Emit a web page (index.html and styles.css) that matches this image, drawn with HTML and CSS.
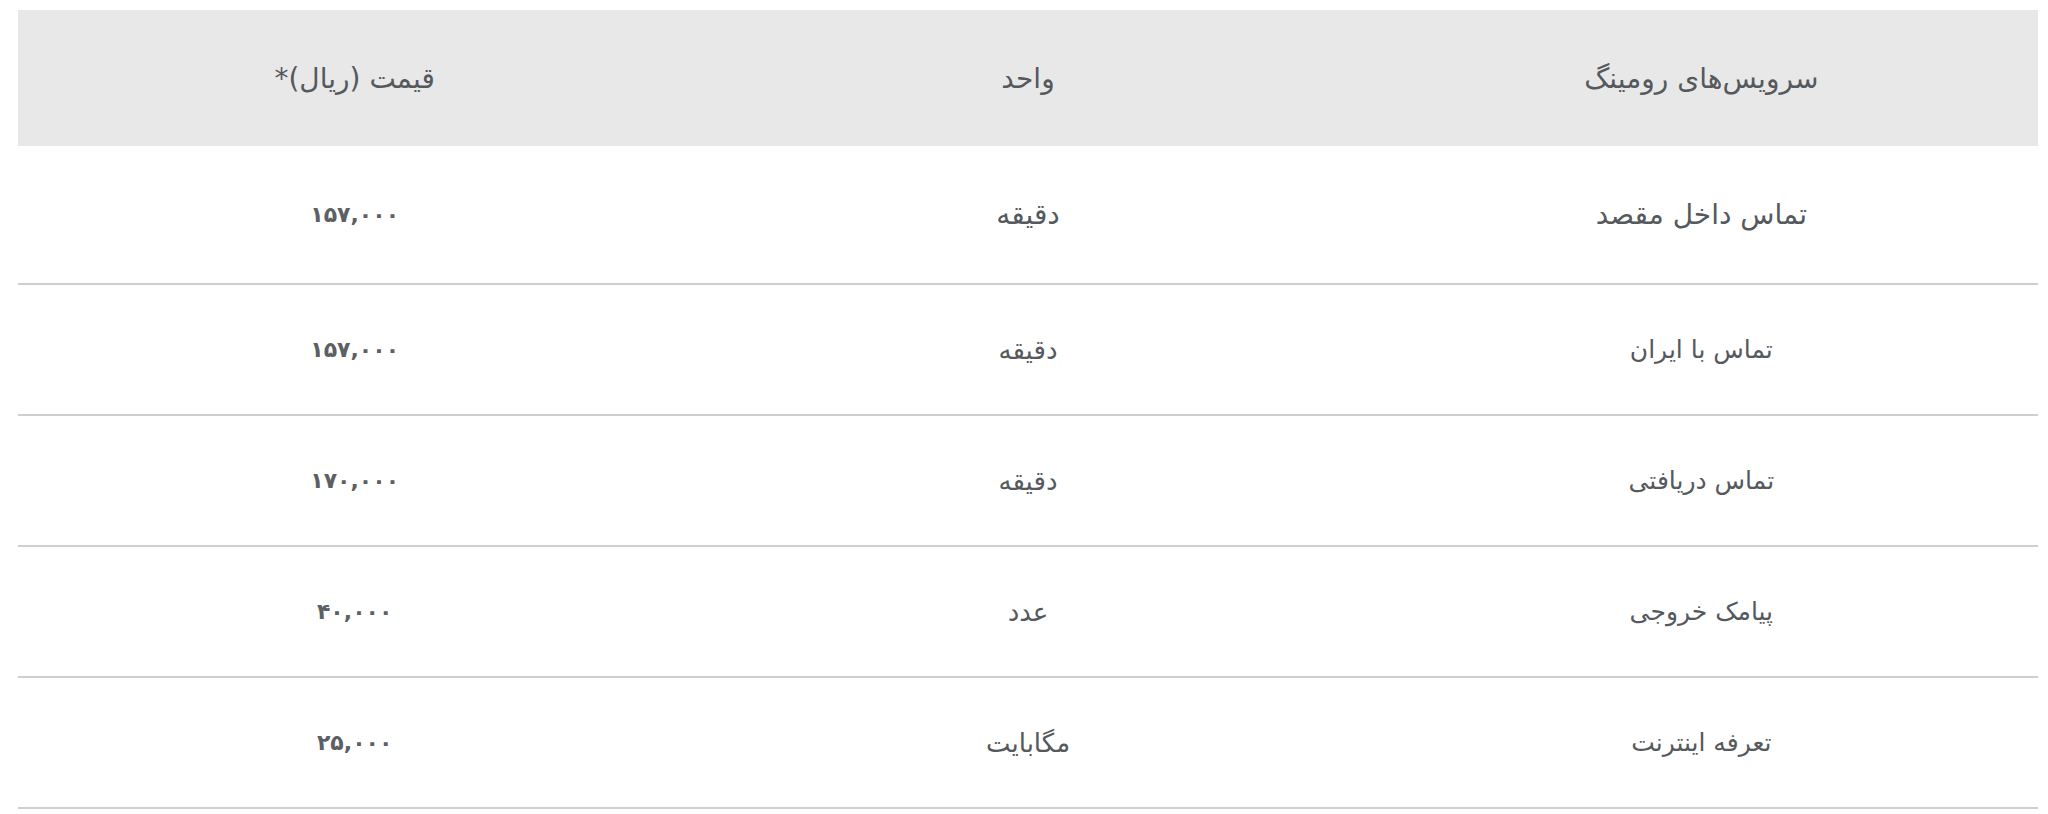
FILE: index.html
```html
<!DOCTYPE html>
<html lang="fa" dir="rtl">
<head>
<meta charset="utf-8">
<title>تعرفه رومینگ</title>
<link rel="stylesheet" href="styles.css">
</head>
<body>
<div class="wrap">
  <table class="rates">
    <thead>
      <tr>
        <th>سرویس‌های رومینگ</th>
        <th>واحد</th>
        <th>قیمت (ریال)*</th>
      </tr>
    </thead>
    <tbody>
      <tr class="first">
        <td>تماس داخل مقصد</td>
        <td>دقیقه</td>
        <td class="num">۱۵۷,۰۰۰</td>
      </tr>
      <tr>
        <td>تماس با ایران</td>
        <td>دقیقه</td>
        <td class="num">۱۵۷,۰۰۰</td>
      </tr>
      <tr>
        <td>تماس دریافتی</td>
        <td>دقیقه</td>
        <td class="num">۱۷۰,۰۰۰</td>
      </tr>
      <tr>
        <td>پیامک خروجی</td>
        <td>عدد</td>
        <td class="num">۴۰,۰۰۰</td>
      </tr>
      <tr>
        <td>تعرفه اینترنت</td>
        <td>مگابایت</td>
        <td class="num">۲۵,۰۰۰</td>
      </tr>
    </tbody>
  </table>
</div>
</body>
</html>
```
FILE: styles.css
```css
html, body {
  margin: 0;
  padding: 0;
  background: #ffffff;
}

.wrap {
  padding: 10px 10px 0 18px;
}

.rates {
  width: 100%;
  border-collapse: collapse;
  table-layout: fixed;
  font-family: "DejaVu Sans", sans-serif;
  color: #55595d;
}

.rates th {
  background: #e8e8e8;
  height: 136px;
  padding: 0;
  font-weight: normal;
  font-size: 28px;
  text-align: center;
  vertical-align: middle;
}

.rates td {
  height: 129px;
  padding: 0;
  font-size: 25px;
  text-align: center;
  vertical-align: middle;
  border-bottom: 2px solid #cfcfcf;
}

.rates tr.first td {
  height: 137px;
  font-size: 28px;
}

.rates td:nth-child(2) {
  font-size: 26px;
}

.rates td.num,
.rates tr.first td.num {
  font-size: 22px;
  font-weight: bold;
  color: #5c6064;
}
```
